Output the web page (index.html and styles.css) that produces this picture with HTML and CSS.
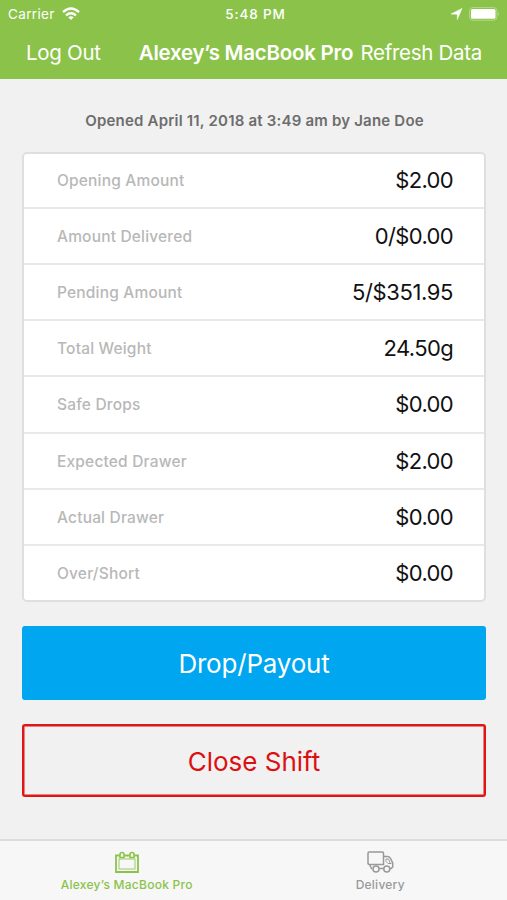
FILE: index.html
```html
<!DOCTYPE html>
<html lang="en">
<head>
<meta charset="utf-8">
<title>Drawer</title>
<link rel="stylesheet" href="styles.css">
</head>
<body>
<div class="app">
  <header class="header">
    <div class="status">
      <div class="status-left"><span class="carrier">Carrier</span>
        <svg class="wifi" width="18" height="14" viewBox="0 0 18 14"><g fill="none" stroke="#fff" stroke-width="2.4"><path d="M1 5.2Q9-2 17 5.2"/><path d="M4 8.3Q9 4 14 8.3"/></g><path fill="#fff" d="M6.300 10.200Q9 8.100 11.700 10.200L9 13z"/></svg>
      </div>
      <span class="time">5:48 PM</span>
      <div class="status-right">
        <svg width="11" height="12" viewBox="0 0 11 12"><path fill="#fff" stroke="#fff" stroke-width=".5" d="M11 .4L6.300 11.600V6.200L0 6.100z"/></svg>
        <svg width="31" height="14" viewBox="0 0 31 14"><rect x=".6" y=".6" width="27.300" height="12.600" rx="3" fill="none" stroke="#b5d98a"/><rect x="2" y="2" width="24.500" height="9.800" rx="1.500" fill="#fff"/><path d="M29 4.800q1.800 2 0 4.300z" fill="#b5d98a"/></svg>
      </div>
    </div>
    <nav class="nav"><span class="logout">Log Out</span><h1 class="title">Alexey’s MacBook Pro</h1><span class="refresh">Refresh Data</span></nav>
  </header>
  <main class="main">
    <p class="opened">Opened April 11, 2018 at 3:49 am by Jane Doe</p>
    <dl class="card">
      <div class="row"><dt>Opening Amount</dt><dd>$2.00</dd></div>
      <div class="row"><dt>Amount Delivered</dt><dd>0/$0.00</dd></div>
      <div class="row"><dt>Pending Amount</dt><dd class="long">5/$351.95</dd></div>
      <div class="row"><dt>Total Weight</dt><dd>24.50g</dd></div>
      <div class="row"><dt>Safe Drops</dt><dd>$0.00</dd></div>
      <div class="row"><dt>Expected Drawer</dt><dd>$2.00</dd></div>
      <div class="row"><dt>Actual Drawer</dt><dd>$0.00</dd></div>
      <div class="row"><dt>Over/Short</dt><dd>$0.00</dd></div>
    </dl>
    <button class="btn primary">Drop/Payout</button>
    <button class="btn danger">Close Shift</button>
  </main>
  <footer class="tabs">
    <div class="tab active">
      <svg width="24" height="22" viewBox="0 0 24 22" fill="none" stroke="currentColor"><path stroke-width="1.800" d="M4.500 4.500H1V21H23V4.500H19.500M9.500 4.500h5"/><rect x="4" y="8" width="16" height="10" stroke-width="1.200" opacity=".7"/><path stroke-width="1.600" d="M5 6.500V3.500a2 2 0 0 1 4 0v3zM15 6.500V3.500a2 2 0 0 1 4 0v3z"/></svg>
      <span>Alexey’s MacBook Pro</span>
    </div>
    <div class="tab">
      <svg width="27" height="22" viewBox="0 0 27 22" fill="none" stroke="currentColor" stroke-width="1.500"><path d="M5.500 17.500H4.500L2.500 13.500M2.200 1H15.300Q16.500 1 16.500 2.200V13.500H2.200Q1 13.500 1 12.300V2.200Q1 1 2.200 1zM12.200 17.500h4.500M16.500 5.500h4.200q2 0 3 2.200l2 4.300V16l-1.500 1.500h-1.200"/><path d="M19 8v2.500l2 2h3.500M19 8h2.500l1.700 4" stroke-width="1"/><circle cx="9" cy="18" r="3"/><circle cx="19.800" cy="18" r="3"/></svg>
      <span>Delivery</span>
    </div>
  </footer>
</div>
</body>
</html>
```
FILE: styles.css
```css
* { box-sizing: border-box; margin: 0; padding: 0; }
body { font-family: Inter, "Liberation Sans", sans-serif; background: #f1f1f1; }
.app { height: 900px; display: flex; flex-direction: column; }
svg { display: block; flex: none; overflow: visible; }
.header { height: 79px; background: #8bc34a; color: #fff; }
.status { height: 27px; display: grid; grid-template-columns: 1fr auto 1fr; align-items: center; padding: 1px 7px 0 8px; font-size: 13.5px; }
.status-left, .status-right { display: flex; align-items: center; gap: 7px; }
.status-right { justify-content: flex-end; }
.carrier { letter-spacing: .35px; }
.time { padding-left: 3px; font-weight: 500; letter-spacing: .85px; }
.nav { height: 50px; display: flex; align-items: center; padding: 0 25px 0 26px; font-size: 20.5px; white-space: nowrap; }
.logout { width: 113px; letter-spacing: -.3px; }
.title { width: 222px; font-size: 20.5px; font-weight: 600; letter-spacing: -.25px; }
.refresh { letter-spacing: -.3px; }
.main { flex: 1; padding: 0 21px 0 22px; }
.opened { height: 73px; padding: 32px 0 0 1px; line-height: 20px; text-align: center; font-size: 15px; font-weight: 600; letter-spacing: .2px; color: #6d6d6d; }
.card { height: 450px; border: 2px solid #dfdfdf; border-radius: 5px; background: #fff; display: grid; grid-template-rows: 53px repeat(7, 1fr); }
.row { display: flex; align-items: center; justify-content: space-between; padding: 0 31px 0 33px; }
.row + .row { border-top: 2px solid #e9e9e9; }
.row:nth-child(n+5) { padding-top: 1px; }
.row dt { font-size: 15.5px; font-weight: 500; letter-spacing: .18px; color: #b8b8b8; }
.row dd { padding-bottom: 1px; font-size: 22px; color: #111; letter-spacing: -.65px; }
.row .long { letter-spacing: -.4px; }
.btn { display: block; width: 100%; height: 73px; padding-top: 2px; border-radius: 3px; font: 400 26px Inter, "Liberation Sans", sans-serif; letter-spacing: -.2px; }
.primary { margin-top: 24px; height: 74px; padding-top: 0; border: 0; background: #00a6ef; color: #fff; }
.danger { margin-top: 24px; border: 2px solid #e01515; box-shadow: inset 0 0 0 .5px #e01515; background: transparent; color: #dc1010; letter-spacing: 0; }
.tabs { height: 61px; border-top: 2px solid #dcdcdc; background: #f7f7f7; display: grid; grid-template-columns: 1fr 1fr; }
.tab { display: flex; flex-direction: column; align-items: center; padding-top: 10px; font-size: 12px; font-weight: 500; line-height: 15px; letter-spacing: .25px; color: #999; gap: 4px; }
.active { color: #8bc34a; }
```
